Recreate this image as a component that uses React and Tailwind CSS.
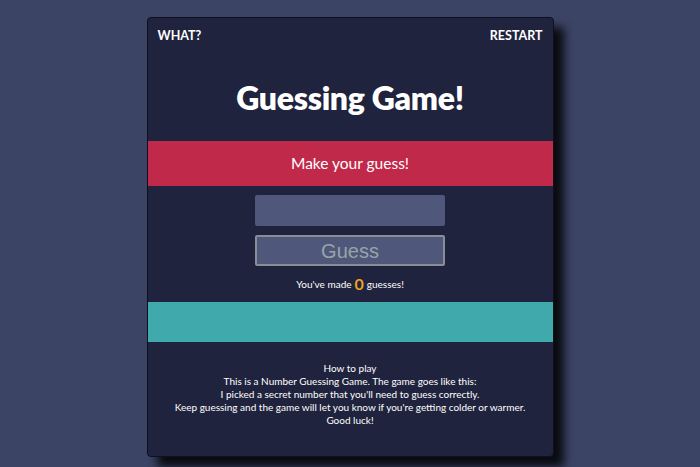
export default function App() {
  return (
    <div className="min-h-screen w-full bg-[#3c4465] flex justify-center pt-[17px]" style={{ fontFamily: "Lato, 'Noto Sans', sans-serif" }}>
      <div className="w-[407px] h-[440px] bg-[#1f233d] border border-[#0e1020] rounded-[4px] shadow-[10px_10px_10px_rgba(0,0,0,0.85)] flex flex-col overflow-hidden">
        {/* header */}
        <div className="flex justify-between items-center px-[10px] h-[36px] text-white font-bold text-[12.5px]">
          <span>WHAT?</span>
          <span>RESTART</span>
        </div>

        <h1 className="h-[87px] flex items-center justify-center text-white font-extrabold text-[32px] tracking-[-0.3px]">
          Guessing Game!
        </h1>

        <div className="h-[45px] bg-[#c1294b] flex items-center justify-center text-white text-[15.5px]">
          Make your guess!
        </div>

        <div className="flex flex-col items-center pt-[9px]">
          <input
            type="text"
            className="w-[190px] h-[31px] bg-[#4f587a] rounded-[2px] outline-none"
          />
          <button className="mt-[9px] w-[190px] h-[31px] bg-[#4f587a] border-2 border-[#8a8d94] rounded-[2px] text-[#9aa3a8] text-[20px] flex items-center justify-center" style={{ fontFamily: "'Liberation Sans', Arial, sans-serif" }}>
            Guess
          </button>
          <p className="h-[36px] flex items-center text-white text-[10px]">
            You've made<span className="text-[#f0a020] text-[16px] font-bold mx-[3px] leading-none">0</span>guesses!
          </p>
        </div>

        <div className="h-[40px] bg-[#40a9ab]"></div>

        <div className="pt-[20px] text-center text-white text-[10px] leading-[13px]">
          <p>How to play</p>
          <p>This is a Number Guessing Game. The game goes like this:</p>
          <p>I picked a secret number that you'll need to guess correctly.</p>
          <p>Keep guessing and the game will let you know if you're getting colder or warmer.</p>
          <p>Good luck!</p>
        </div>
      </div>
    </div>
  );
}
